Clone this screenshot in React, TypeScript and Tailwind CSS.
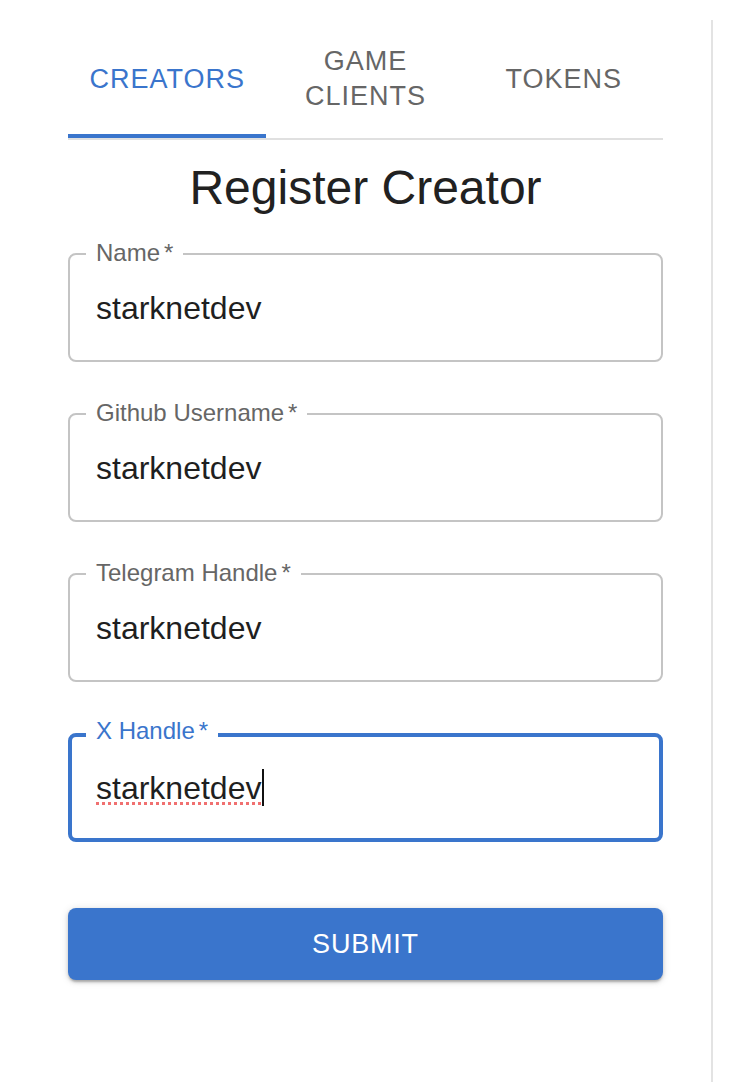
import React from "react";

const FONT = { fontFamily: '"Liberation Sans", Arial, Helvetica, sans-serif' };

function Field({ label, value }: { label: string; value: string }) {
  return (
    <div className="relative h-[109px] rounded-[8px] border-2 border-[#c4c4c4] flex items-center pl-[26px]">
      <span className="absolute left-[16px] top-[-16px] bg-white px-[10px] text-[24px] leading-[28px] text-[#666666]">
        {label}
        <span className="ml-[4px]">*</span>
      </span>
      <span className="text-[32px] leading-[40px] text-[#1f1f1f]">{value}</span>
    </div>
  );
}

export default function App() {
  return (
    <div className="flex bg-white min-h-[1082px]" style={FONT}>
      <div className="mt-[20px] w-[713px] min-h-[1062px] border-r-2 border-[#e3e3e3] pl-[68px] pr-[48px]">
        {/* Tabs */}
        <div className="flex border-b-2 border-[#e0e0e0]">
          <div className="relative flex-1 h-[118px] flex items-center justify-center text-[27px] leading-[35px] tracking-[1px] text-[#3a75cc]">
            CREATORS
            <span className="absolute left-0 right-0 bottom-0 h-[4px] bg-[#3a75cc]" />
          </div>
          <div className="flex-1 h-[118px] flex items-center justify-center text-center text-[27px] leading-[35px] tracking-[1px] text-[#666666]">
            GAME
            <br />
            CLIENTS
          </div>
          <div className="flex-1 h-[118px] flex items-center justify-center text-[27px] leading-[35px] tracking-[1px] text-[#666666]">
            TOKENS
          </div>
        </div>

        {/* Heading */}
        <div className="h-[96px] flex items-center justify-center">
          <h1 className="text-[48px] leading-[58px] text-[#212121]">Register Creator</h1>
        </div>

        {/* Fields */}
        <div className="mt-[17px] flex flex-col gap-[51px]">
          <Field label="Name" value="starknetdev" />
          <Field label="Github Username" value="starknetdev" />
          <Field label="Telegram Handle" value="starknetdev" />
          <div className="relative h-[109px] rounded-[8px] border-4 border-[#3a75cc] flex items-center pl-[24px]">
            <span className="absolute left-[14px] top-[-20px] bg-white px-[10px] text-[24px] leading-[28px] text-[#3a75cc]">
              X Handle
              <span className="ml-[4px]">*</span>
            </span>
            <span className="flex items-center text-[32px] leading-[40px] text-[#1f1f1f]">
              <span className="underline decoration-dotted decoration-[#f07070] decoration-[3px] underline-offset-[3px]">
                starknetdev
              </span>
              <span className="ml-[1px] w-[2px] h-[37px] bg-[#111111]" />
            </span>
          </div>
        </div>

        {/* Submit */}
        <button className="mt-[66px] w-full h-[72px] rounded-[8px] bg-[#3a75cc] text-white text-[27px] tracking-[0.8px] shadow-[0_3px_2px_-1px_rgba(0,0,0,0.2),0_2px_4px_0_rgba(0,0,0,0.14),0_1px_8px_0_rgba(0,0,0,0.12)]">
          SUBMIT
        </button>
      </div>
    </div>
  );
}
